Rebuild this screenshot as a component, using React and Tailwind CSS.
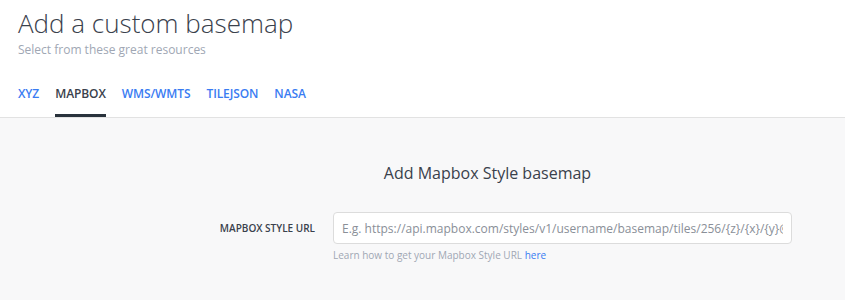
import React, { useState } from 'react';

const TABS = ['XYZ', 'MAPBOX', 'WMS/WMTS', 'TILEJSON', 'NASA'];

export default function App() {
  const [active, setActive] = useState('MAPBOX');
  const [url, setUrl] = useState('');

  return (
    <div className="w-[845px] h-[300px] bg-white overflow-hidden font-['Open_Sans',sans-serif]">
      <div className="px-[18px] pt-[5px]">
        <h1 className="text-[26px] leading-[36px] font-light text-[#3a414c]">Add a custom basemap</h1>
        <p className="text-[12px] leading-[16px] text-[#a0a7b4] mt-[1px]">Select from these great resources</p>
        <div className="flex gap-4 mt-[28px]">
          {TABS.map((tab) => (
            <button
              key={tab}
              onClick={() => setActive(tab)}
              className={
                'pb-[12px] text-[12px] leading-[16px] font-semibold tracking-[-0.1px] border-b-[3px] ' +
                (active === tab ? 'text-[#3a414c] border-[#29323c]' : 'text-[#3a7cf2] border-transparent')
              }
            >
              {tab}
            </button>
          ))}
        </div>
      </div>
      <div className="border-t border-[#e2e2e2] bg-[#f8f8f9] h-full">
        <div className="ml-[130px] w-[715px] pt-[43px]">
          <h2 className="text-center text-[16px] leading-[24px] text-[#3a414c]">Add Mapbox Style basemap</h2>
          <div className="flex items-center mt-[27px]">
            <label className="w-[203px] pr-[18px] text-right text-[10px] font-semibold text-[#3a414c]">
              MAPBOX STYLE URL
            </label>
            <input
              type="text"
              value={url}
              onChange={(e) => setUrl(e.target.value)}
              placeholder="E.g. https://api.mapbox.com/styles/v1/username/basemap/tiles/256/{z}/{x}/{y}@2x?access_token=..."
              className="w-[459px] h-[32px] px-[8px] bg-white border border-[#dcdcdc] rounded-[4px] text-[12px] text-[#3a414c] placeholder:text-[#8a8f98] outline-none"
            />
          </div>
          <p className="ml-[203px] mt-[4px] text-[10px] leading-[14px] text-[#a0a7b4]">
            Learn how to get your Mapbox Style URL <a href="#" className="text-[#3a7cf2]">here</a>
          </p>
        </div>
      </div>
    </div>
  );
}
